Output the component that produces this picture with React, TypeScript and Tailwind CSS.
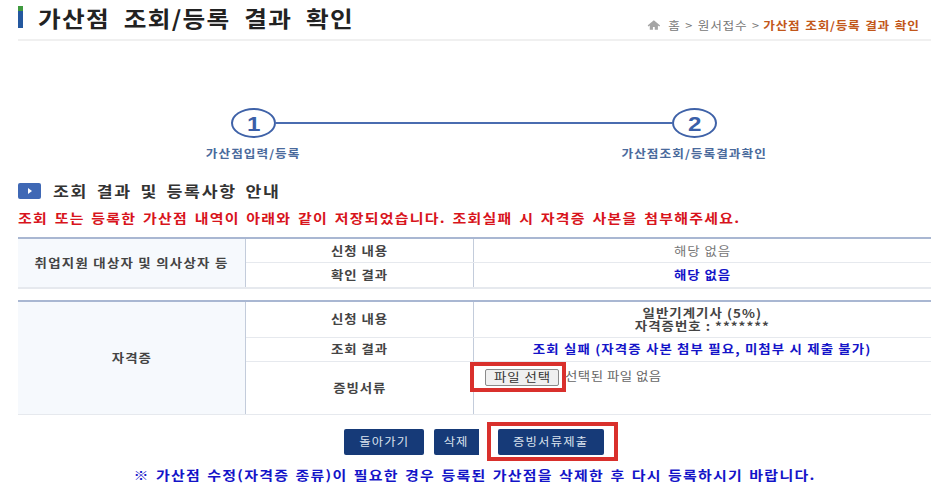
import * as React from "react";

const font = { fontFamily: '"Noto Sans CJK KR", "Noto Sans", sans-serif' };

// the source picture is stretched sideways, so the table text gets the same treatment
function T({ children, className = "" }: { children: React.ReactNode; className?: string }) {
  return <span className={`inline-block scale-x-[1.12] whitespace-nowrap ${className}`}>{children}</span>;
}

function Step({ n, label }: { n: string; label: string }) {
  return (
    <div className="flex w-[45px] flex-col items-center">
      <div className="flex h-[30px] w-[45px] items-center justify-center rounded-[50%] border-2 border-[#3f62a8] text-[21px] leading-none font-bold text-[#3a5fa8] [font-family:'Liberation_Sans']">
        <span className="inline-block scale-x-[1.15]">{n}</span>
      </div>
      <div className="mt-[8px] scale-x-[1.15] text-[11px] leading-[14px] font-bold tracking-[0.9px] whitespace-nowrap text-[#4a6a9c]">
        {label}
      </div>
    </div>
  );
}

function HeadCell({ children, className = "" }: { children: React.ReactNode; className?: string }) {
  return (
    <div className={`flex w-[228px] shrink-0 items-center justify-center border-r border-[#c3ccdb] bg-[#f6f9fd] text-[12px] font-bold tracking-[0.8px] text-[#444] ${className}`}>
      <T>{children}</T>
    </div>
  );
}

export default function App() {
  return (
    <div className="h-[496px] w-[936px] overflow-hidden bg-white pr-[5px] pl-[18px]" style={font}>
      {/* page title */}
      <div className="flex h-[41px] items-start justify-between border-b-2 border-[#f0f0f0]">
        <div className="mt-[6px] flex items-center">
          <div className="h-[22px] w-[5px] bg-[linear-gradient(#3f9a3f_0,#3f9a3f_25%,#24589f_25%)]" />
          <h1 className="ml-[15px] origin-left scale-x-[1.12] text-[22px] leading-[22px] font-bold tracking-[1.2px] [word-spacing:6px] whitespace-nowrap text-[#222]">
            가산점 조회/등록 결과 확인
          </h1>
        </div>
        <div className="mt-[17px] mr-[11px] flex origin-right scale-x-[1.15] items-center text-[11px] leading-[16px] tracking-[0.65px] [word-spacing:1px] whitespace-nowrap text-[#777]">
          <svg viewBox="0 0 14 12" className="mr-[7px] h-[10px] w-[11px] fill-[#a5a5a5]">
            <path d="M7 0 0 6.5 1 8l1.5-1.3V12H6V8.5h2V12h3.500V6.700L13 8l1-1.500z" />
          </svg>
          <span>홈 &gt; 원서접수 &gt; </span>
          <span className="ml-[3px] font-bold text-[#c2571a]">가산점 조회/등록 결과 확인</span>
        </div>
      </div>

      {/* steps */}
      <div className="mt-[67px] flex pl-[213px]">
        <Step n="1" label="가산점입력/등록" />
        <div className="mt-[14px] h-[2px] w-[396px] bg-[#4a6cb0]" />
        <Step n="2" label="가산점조회/등록결과확인" />
      </div>

      {/* section */}
      <div className="mt-[21px] flex items-center">
        <div className="flex h-[16px] w-[23px] items-center justify-center rounded-[2px] bg-[#3f68b5]">
          <div className="h-0 w-0 border-y-[3px] border-l-[4px] border-y-transparent border-l-white" />
        </div>
        <h2 className="ml-[12px] origin-left scale-x-[1.15] text-[15px] leading-[20px] font-bold tracking-[1.5px] [word-spacing:2.5px] whitespace-nowrap text-[#333]">
          조회 결과 및 등록사항 안내
        </h2>
      </div>
      <p className="mt-[8px] origin-left scale-x-[1.15] text-[13px] leading-[18px] font-bold tracking-[1.1px] [word-spacing:1.7px] whitespace-nowrap text-[#d8141c]">
        조회 또는 등록한 가산점 내역이 아래와 같이 저장되었습니다. 조회실패 시 자격증 사본을 첨부해주세요.
      </p>

      {/* table one */}
      <div className="mt-[10px] flex border-t-2 border-b-2 border-t-[#a9b7d2] border-b-[#e6e9ee]">
        <HeadCell className="tracking-[1.1px]">취업지원 대상자 및 의사상자 등</HeadCell>
        <div className="flex flex-1 flex-col">
          <div className="flex h-[24px] border-b border-[#e6e9ee]">
            <HeadCell className="bg-white">신청 내용</HeadCell>
            <div className="flex flex-1 items-center justify-center text-[12px] tracking-[0.8px] text-[#777]">
              <T>해당 없음</T>
            </div>
          </div>
          <div className="flex h-[24px]">
            <HeadCell className="bg-white">확인 결과</HeadCell>
            <div className="flex flex-1 items-center justify-center text-[12px] font-bold tracking-[0.8px] text-[#1414c8]">
              <T>해당 없음</T>
            </div>
          </div>
        </div>
      </div>

      {/* table two */}
      <div className="mt-[11px] flex border-t-2 border-b border-t-[#a9b7d2] border-b-[#e6e9ee]">
        <HeadCell>자격증</HeadCell>
        <div className="flex flex-1 flex-col">
          <div className="flex h-[36px] border-b border-[#e6e9ee]">
            <HeadCell className="bg-white pb-[2px]">신청 내용</HeadCell>
            <div className="flex flex-1 flex-col items-center justify-center pb-[2px] text-[12px] leading-[13px] font-bold tracking-[0.9px] text-[#444]">
              <T>일반기계기사 (5%)</T>
              <T>자격증번호 : *******</T>
            </div>
          </div>
          <div className="flex h-[24px] border-b border-[#e6e9ee]">
            <HeadCell className="bg-white pb-[2px]">조회 결과</HeadCell>
            <div className="flex flex-1 items-center justify-center pb-[2px] text-[12px] font-bold tracking-[1px] text-[#1414c8]">
              <T>조회 실패 (자격증 사본 첨부 필요, 미첨부 시 제출 불가)</T>
            </div>
          </div>
          <div className="flex h-[52px]">
            <HeadCell className="bg-white">증빙서류</HeadCell>
            <div className="flex flex-1 items-start">
              <div className="-mr-[1px] -ml-[4px] flex h-[30px] w-[96px] shrink-0 items-center border-4 border-[#d9302c] pl-[11px]">
                <button className="h-[17px] w-[74px] shrink-0 rounded-[2px] border border-[#8a8a8a] bg-[#f0f0f0] text-[12px] leading-none tracking-[0.8px] text-[#333]">
                  <T>파일 선택</T>
                </button>
              </div>
              <span className="mt-[6px] origin-left scale-x-[1.12] text-[12px] leading-[16px] tracking-[0.4px] whitespace-nowrap text-[#666]">선택된 파일 없음</span>
            </div>
          </div>
        </div>
      </div>

      {/* buttons */}
      <div className="mt-[7px] flex items-center pl-[326px]">
        <button className="h-[26px] w-[80px] rounded-[2px] bg-[#163a78] text-[11px] tracking-[1px] text-[#dbe3ee]"><T>돌아가기</T></button>
        <button className="ml-[10px] h-[26px] w-[45px] rounded-l-[2px] bg-[#163a78] text-[11px] tracking-[1px] text-[#dbe3ee]"><T>삭제</T></button>
        <div className="ml-[8px] flex h-[39px] w-[131px] items-center border-4 border-[#d9302c] pl-[7px]">
          <button className="h-[26px] w-[106px] rounded-[2px] bg-[#163a78] text-[11px] tracking-[1.1px] text-[#dbe3ee]"><T>증빙서류제출</T></button>
        </div>
      </div>

      <p className="mt-[5px] scale-x-[1.15] text-center text-[13px] leading-[18px] font-bold tracking-[1.1px] [word-spacing:1.4px] whitespace-nowrap text-[#1414c8]">
        ※ 가산점 수정(자격증 종류)이 필요한 경우 등록된 가산점을 삭제한 후 다시 등록하시기 바랍니다.
      </p>
    </div>
  );
}
